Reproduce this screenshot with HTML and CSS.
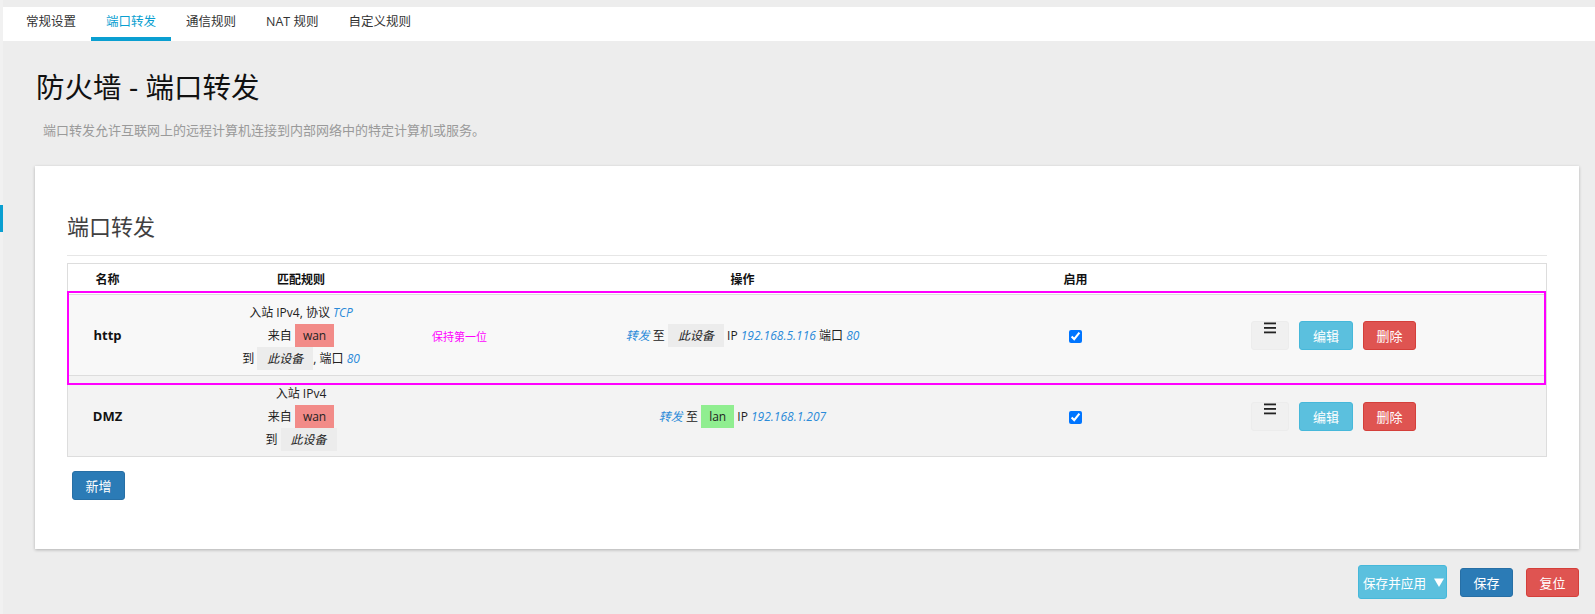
FILE: index.html
```html
<!DOCTYPE html>
<html lang="zh-CN">
<head>
<meta charset="utf-8">
<title>防火墙 - 端口转发</title>
<link rel="stylesheet" href="styles.css">
</head>
<body>
<div class="page">
  <aside class="side"><div class="side-marker"></div></aside>
  <main class="main">
    <nav class="tabs">
      <a class="tab">常规设置</a>
      <a class="tab active">端口转发</a>
      <a class="tab">通信规则</a>
      <a class="tab">NAT 规则</a>
      <a class="tab">自定义规则</a>
    </nav>
    <h1 class="title">防火墙 - 端口转发</h1>
    <p class="desc">端口转发允许互联网上的远程计算机连接到内部网络中的特定计算机或服务。</p>

    <section class="panel">
      <h2 class="panel-title">端口转发</h2>
      <div class="table-wrap">
        <div class="table">
          <div class="row head">
            <div class="cell">名称</div>
            <div class="cell">匹配规则</div>
            <div class="cell">操作</div>
            <div class="cell">启用</div>
            <div class="cell"></div>
          </div>
          <div class="row odd">
            <div class="cell name">http</div>
            <div class="cell match">
              <div class="ln">入站 IPv4, 协议 <i class="v">TCP</i></div>
              <div class="ln">来自 <span class="badge wan">wan</span></div>
              <div class="ln">到 <span class="badge dev"><i>此设备</i></span>, 端口 <i class="v">80</i></div>
            </div>
            <div class="cell action">
              <div class="ln"><i class="v">转发</i> 至 <span class="badge dev"><i>此设备</i></span> IP <i class="v">192.168.5.116</i> 端口 <i class="v">80</i></div>
            </div>
            <div class="cell"><input type="checkbox" checked></div>
            <div class="cell btns">
              <span class="btn drag"><svg width="12" height="12" viewBox="0 0 12 12"><rect x="0" y="0.5" width="12" height="1.8" fill="#222"/><rect x="0" y="5" width="12" height="1.8" fill="#222"/><rect x="0" y="9.5" width="12" height="1.8" fill="#222"/></svg></span>
              <span class="btn edit">编辑</span>
              <span class="btn del">删除</span>
            </div>
          </div>
          <div class="row even">
            <div class="cell name">DMZ</div>
            <div class="cell match">
              <div class="ln">入站 IPv4</div>
              <div class="ln">来自 <span class="badge wan">wan</span></div>
              <div class="ln">到 <span class="badge dev"><i>此设备</i></span></div>
            </div>
            <div class="cell action">
              <div class="ln"><i class="v">转发</i> 至 <span class="badge lan">lan</span> IP <i class="v">192.168.1.207</i></div>
            </div>
            <div class="cell"><input type="checkbox" checked></div>
            <div class="cell btns">
              <span class="btn drag"><svg width="12" height="12" viewBox="0 0 12 12"><rect x="0" y="0.5" width="12" height="1.8" fill="#222"/><rect x="0" y="5" width="12" height="1.8" fill="#222"/><rect x="0" y="9.5" width="12" height="1.8" fill="#222"/></svg></span>
              <span class="btn edit">编辑</span>
              <span class="btn del">删除</span>
            </div>
          </div>
        </div>
        <div class="drag-hint"><span class="hint-text">保持第一位</span></div>
      </div>
      <div class="add-row"><span class="btn primary">新增</span></div>
    </section>

    <div class="actions">
      <span class="btn apply">保存并应用<svg class="caret" width="10" height="9" viewBox="0 0 10 9"><polygon points="0,0.5 10,0.5 5,9" fill="#fff"/></svg></span>
      <span class="btn primary">保存</span>
      <span class="btn del">复位</span>
    </div>
  </main>
</div>
</body>
</html>
```

FILE: styles.css
```css
html, body {
  margin: 0;
  padding: 0;
}
body {
  background: #ededed;
  font-family: "Open Sans", "Noto Sans CJK SC", sans-serif;
  color: #222;
  width: 1595px;
  height: 614px;
  overflow: hidden;
}
.page {
  display: flex;
  min-height: 614px;
}
.side {
  width: 3px;
  flex: none;
  background: #f1f1f1;
}
.side-marker {
  margin-top: 205px;
  height: 27px;
  background: #0a9fd1;
}
.main {
  flex: 1;
  padding: 7px 16px 0 0;
}
.tabs {
  display: flex;
  height: 34px;
  background: #fff;
  margin-right: -16px;
  padding-left: 8px;
}
.tab {
  display: block;
  padding: 0 15px;
  height: 30px;
  line-height: 30px;
  font-size: 12.5px;
  color: #333;
  border-bottom: 4px solid transparent;
}
.tab.active {
  color: #0a9fd1;
  border-bottom-color: #0a9fd1;
}
.title {
  margin: 29px 0 0 33px;
  font-size: 28.5px;
  line-height: 34px;
  font-weight: normal;
  color: #111;
}
.desc {
  margin: 16px 0 0 40px;
  font-size: 13px;
  line-height: 20px;
  color: #9a9a9a;
}
.panel {
  margin: 26px 0 0 32px;
  background: #fff;
  padding: 45px 32px 49px;
  box-shadow: 0 1px 3px rgba(0, 0, 0, 0.25);
}
.panel-title {
  margin: 0;
  font-size: 22px;
  line-height: 30px;
  font-weight: normal;
  color: #404040;
  padding-bottom: 14px;
  border-bottom: 1px solid #e6e6e6;
}
.table-wrap {
  position: relative;
  margin-top: 7px;
}
.table {
  border: 1px solid #ddd;
}
.row {
  display: grid;
  grid-template-columns: 79px 308px 575px 91px 1fr;
  align-items: center;
  font-size: 12px;
}
.row.head {
  height: 30px;
  border-bottom: 1px solid #ddd;
  font-weight: bold;
  color: #111;
}
.row.odd {
  height: 80px;
  background: #f8f8f8;
  border-bottom: 1px solid #ddd;
}
.row.even {
  height: 80px;
  background: #f3f3f3;
}
.cell {
  text-align: center;
}
.cell.name {
  font-weight: bold;
  font-size: 13px;
  color: #111;
}
.ln {
  line-height: 23px;
  white-space: nowrap;
}
i {
  font-style: italic;
}
.v {
  color: #2a8ad8;
}
.badge {
  display: inline-block;
  height: 23px;
  line-height: 23px;
  padding: 0 9px;
  color: #222;
}
.badge.wan {
  background: #f28b88;
  padding: 0 8px;
}
.badge.dev {
  background: #ececec;
  padding: 0 10px;
}
.badge.lan {
  background: #90ee90;
  padding: 0 8px;
}
input[type="checkbox"] {
  margin: 0;
  width: 13px;
  height: 13px;
  vertical-align: middle;
}
.btns {
  display: flex;
  gap: 10px;
  padding-left: 130px;
}
.btn {
  display: inline-flex;
  align-items: center;
  justify-content: center;
  box-sizing: border-box;
  height: 29px;
  border-radius: 3px;
  font-size: 13px;
  color: #fff;
  border: 1px solid transparent;
}
.btn.drag {
  width: 38px;
  background: #f0f0f0;
  border-color: #ececec;
  align-items: flex-start;
  padding-top: 0;
}
.btn.drag svg {
  display: block;
}
.btn.edit {
  width: 54px;
  background: #5bc0de;
  border-color: #46b8da;
}
.btn.del {
  width: 53px;
  background: #df5451;
  border-color: #d43f3a;
}
.btn.primary {
  width: 53px;
  background: #2b7bb6;
  border-color: #276fa5;
}
.drag-hint {
  position: absolute;
  top: 28px;
  left: 0;
  right: 1px;
  height: 94px;
  box-sizing: border-box;
  border: 2px solid #ff00ff;
}
.hint-text {
  position: absolute;
  left: 363px;
  top: 37px;
  font-size: 11px;
  line-height: 14px;
  color: #ff00ff;
}
.add-row {
  margin-top: 14px;
  padding-left: 5px;
  display: flex;
}
.actions {
  display: flex;
  justify-content: flex-end;
  align-items: center;
  gap: 13px;
  margin-top: 16px;
}
.btn.apply {
  width: 89px;
  height: 34px;
  background: #5bc0de;
  border-color: #46b8da;
  font-size: 12.6px;
  gap: 8px;
  padding-left: 2px;
}
.caret {
  display: block;
}
```
